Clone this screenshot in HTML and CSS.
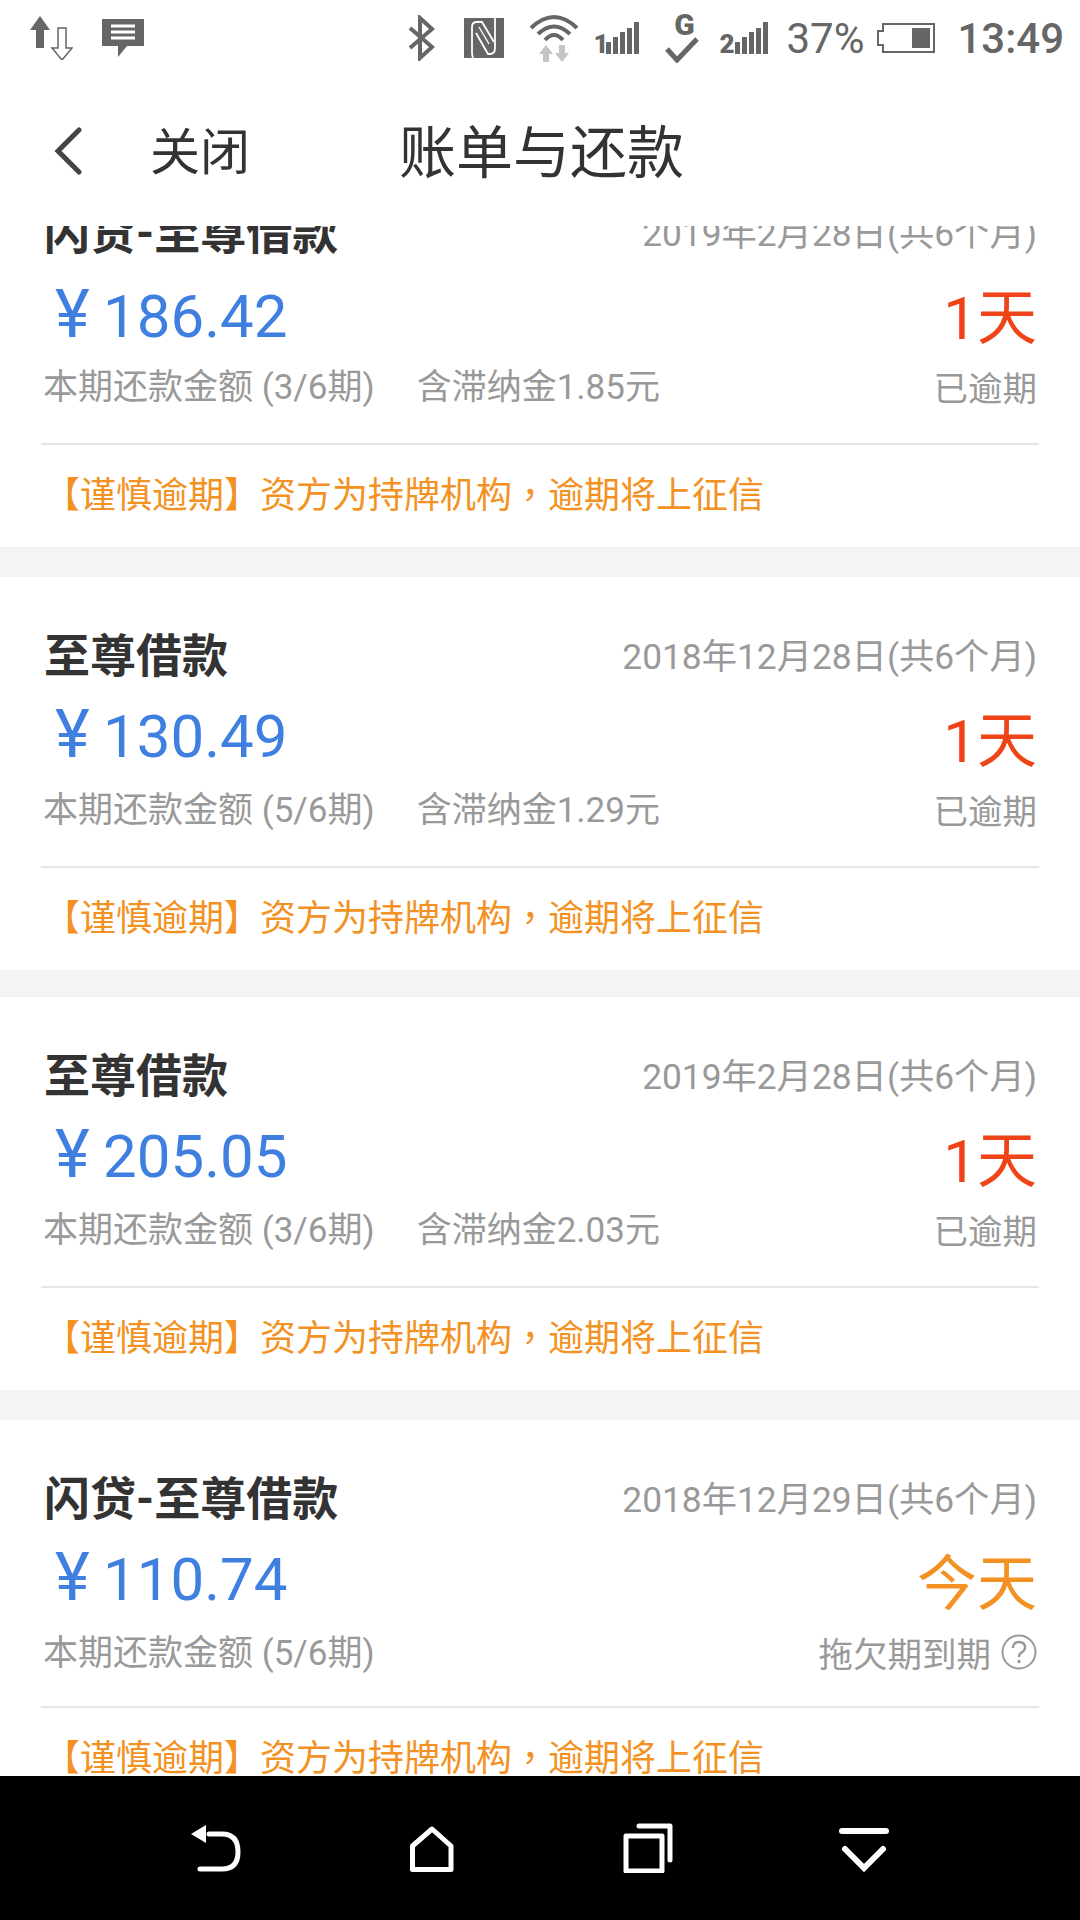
FILE: index.html
```html
<!DOCTYPE html>
<html lang="zh-CN">
<head>
  <meta charset="UTF-8" />
  <meta name="viewport" content="width=device-width, initial-scale=1.0"/>
  <title>账单与还款</title>
  <link rel="stylesheet" href="styles.css">
</head>
<body>
<div class="phone">

  <!-- Status bar -->
  <div class="status">
    <svg class="ic ic-updown" viewBox="0 0 44 44">
      <path d="M11 0 L21 14 H15 V32 H7 V14 H1 Z" fill="#666"/>
      <path d="M29 12 H37 V32 H43 L33 44 L23 32 H29 Z" fill="none" stroke="#666" stroke-width="1.5"/>
    </svg>
    <svg class="ic ic-msg" viewBox="0 0 42 38">
      <path d="M0 0 H42 V27 H25 L16 38 V27 H0 Z" fill="#666"/>
      <path d="M9 7 H33 M9 13 H33 M9 19 H33" stroke="#fff" stroke-width="3"/>
    </svg>
    <div class="spacer"></div>
    <svg class="ic ic-bt" viewBox="0 0 28 46">
      <path d="M3 13 L25 32 L13 43 V3 L25 14 L3 33" fill="none" stroke="#666" stroke-width="4"/>
    </svg>
    <svg class="ic ic-nfc" viewBox="0 0 40 40">
      <rect width="40" height="40" fill="#666"/>
      <path d="M9 40 Q8 38 8 34 V9 Q8 4 13 4 H18 L30 24" fill="none" stroke="#fff" stroke-width="1.8"/>
      <path d="M31 0 V30 Q31 36 26 36 H24 L12 15" fill="none" stroke="#fff" stroke-width="1.8"/>
      <path d="M15 9 L25 26" fill="none" stroke="#fff" stroke-width="1.4"/>
    </svg>
    <svg class="ic ic-wifi" viewBox="0 0 52 48">
      <path d="M3 14 Q26 -8 49 14 M10 20 Q26 5 42 20 M17 26 Q26 16 35 26" fill="none" stroke="#666" stroke-width="4"/>
      <path d="M18 31 L25 40 H21 V48 H15 V40 H11 Z M34 48 L41 39 H37 V31 H31 V39 H27 Z" fill="#c4c4c4"/>
    </svg>
    <div class="sig sig-one">
      <span class="sig-no">1</span><i class="b1"></i><i class="b2"></i><i class="b3"></i><i class="b4"></i><i class="b5"></i>
    </div>
    <div class="net">
      <span class="net-g">G</span>
      <svg class="ic ic-check" viewBox="0 0 38 26">
        <path d="M3 12 L13 23 L33 2" fill="none" stroke="#666" stroke-width="5"/>
      </svg>
    </div>
    <div class="sig sig-two">
      <span class="sig-no">2</span><i class="b1"></i><i class="b2"></i><i class="b3"></i><i class="b4"></i><i class="b5"></i>
    </div>
    <span class="pct">37%</span>
    <svg class="ic ic-batt" viewBox="0 0 58 30">
      <path d="M6 1 H57 V29 H6 V22 H1 V8 H6 Z" fill="none" stroke="#666" stroke-width="2"/>
      <rect x="35" y="5" width="18" height="20" fill="#666"/>
    </svg>
    <span class="clock">13:49</span>
  </div>

  <!-- Title bar -->
  <div class="topbar">
    <svg class="back" viewBox="0 0 30 48">
      <path d="M26 3 L5 24 L26 45" fill="none" stroke="#444" stroke-width="5" stroke-linecap="round"/>
    </svg>
    <span class="close">关闭</span>
    <span class="page-title">账单与还款</span>
  </div>

  <!-- Bills -->
  <div class="list">
    <div class="card card-first">
      <div class="row">
        <span class="name">闪贷-至尊借款</span>
        <span class="date">2019年2月28日(共6个月)</span>
      </div>
      <div class="row row-amount">
        <span class="amount"><span class="yen">¥</span>186.42</span>
        <span class="days">1天</span>
      </div>
      <div class="row row-sub">
        <span class="sub">本期还款金额 (3/6期)<span class="fee">含滞纳金1.85元</span></span>
        <span class="state">已逾期</span>
      </div>
      <div class="warn">【谨慎逾期】资方为持牌机构<span class="comma" lang="zh-TW">，</span>逾期将上征信</div>
    </div>

    <div class="card card-tight">
      <div class="row">
        <span class="name">至尊借款</span>
        <span class="date">2018年12月28日(共6个月)</span>
      </div>
      <div class="row row-amount">
        <span class="amount"><span class="yen">¥</span>130.49</span>
        <span class="days">1天</span>
      </div>
      <div class="row row-sub">
        <span class="sub">本期还款金额 (5/6期)<span class="fee">含滞纳金1.29元</span></span>
        <span class="state">已逾期</span>
      </div>
      <div class="warn">【谨慎逾期】资方为持牌机构<span class="comma" lang="zh-TW">，</span>逾期将上征信</div>
    </div>

    <div class="card">
      <div class="row">
        <span class="name">至尊借款</span>
        <span class="date">2019年2月28日(共6个月)</span>
      </div>
      <div class="row row-amount">
        <span class="amount"><span class="yen">¥</span>205.05</span>
        <span class="days">1天</span>
      </div>
      <div class="row row-sub">
        <span class="sub">本期还款金额 (3/6期)<span class="fee">含滞纳金2.03元</span></span>
        <span class="state">已逾期</span>
      </div>
      <div class="warn">【谨慎逾期】资方为持牌机构<span class="comma" lang="zh-TW">，</span>逾期将上征信</div>
    </div>

    <div class="card card-last">
      <div class="row">
        <span class="name">闪贷-至尊借款</span>
        <span class="date">2018年12月29日(共6个月)</span>
      </div>
      <div class="row row-amount">
        <span class="amount"><span class="yen">¥</span>110.74</span>
        <span class="days days-today">今天</span>
      </div>
      <div class="row row-sub">
        <span class="sub">本期还款金额 (5/6期)</span>
        <span class="state">拖欠期到期
          <svg class="help" viewBox="0 0 36 36">
            <circle cx="18" cy="18" r="16.5" fill="none" stroke="#999" stroke-width="2"/>
            <path d="M12 14 Q12 8 18 8 Q24 8 24 13.5 Q24 16.5 20.5 18.5 Q18 20 18 23" fill="none" stroke="#999" stroke-width="2.4"/>
            <circle cx="18" cy="27.5" r="1.7" fill="#999"/>
          </svg>
        </span>
      </div>
      <div class="warn">【谨慎逾期】资方为持牌机构<span class="comma" lang="zh-TW">，</span>逾期将上征信</div>
    </div>
  </div>

  <!-- Android nav bar -->
  <div class="navbar">
    <svg class="nav-ic" viewBox="0 0 50 50">
      <path d="M18 11 H31 Q47 11 47 29 Q47 46 31 46 H9" fill="none" stroke="#fff" stroke-width="5" stroke-linecap="round"/>
      <path d="M0 11 L15 2 V20 Z" fill="#fff"/>
    </svg>
    <svg class="nav-ic" viewBox="0 0 50 50">
      <path d="M25 6 L44 23 V46.5 H5.5 V23 Z" fill="none" stroke="#fff" stroke-width="5" stroke-linejoin="round"/>
    </svg>
    <svg class="nav-ic" viewBox="0 0 50 50">
      <rect x="3" y="13" width="36" height="35" fill="none" stroke="#fff" stroke-width="5" stroke-linejoin="round"/>
      <path d="M16 3 H47 V37" fill="none" stroke="#fff" stroke-width="5" stroke-linecap="round" stroke-linejoin="round"/>
    </svg>
    <svg class="nav-ic" viewBox="0 0 50 50">
      <path d="M3 8 H47" stroke="#fff" stroke-width="6" stroke-linecap="round"/>
      <path d="M6 26 L25 45 L44 26" fill="none" stroke="#fff" stroke-width="6" stroke-linecap="round"/>
    </svg>
  </div>

</div>
</body>
</html>
```

FILE: styles.css
```css
* {
  box-sizing: border-box;
}

body {
  margin: 0;
  background: #fff;
  font-family: Roboto, "Noto Sans CJK SC", sans-serif;
}

.phone {
  width: 1080px;
  height: 1920px;
  display: flex;
  flex-direction: column;
  overflow: hidden;
  background: #fff;
}

/* status bar */
.status {
  height: 76px;
  display: flex;
  align-items: center;
  padding: 0 16px 0 29px;
  color: #666;
  flex: none;
}
.spacer {
  flex: 1;
}
.ic {
  display: block;
  flex: none;
}
.ic-updown { width: 44px; height: 44px; margin-right: 29px; }
.ic-msg { width: 42px; height: 38px; }
.ic-bt { width: 28px; height: 46px; margin-right: 29px; }
.ic-nfc { width: 40px; height: 40px; margin-right: 24px; }
.ic-wifi { width: 52px; height: 48px; margin-right: 15px; }
.ic-batt { width: 58px; height: 30px; margin: 0 22px 0 13px; }
.ic-check { width: 38px; height: 26px; }

.net {
  display: flex;
  flex-direction: column;
  align-items: center;
  width: 38px;
  margin: 0 17px 0 25px;
}
.net-g {
  font-size: 30px;
  line-height: 24px;
  font-weight: 900;
  margin-left: 2px;
}

.sig {
  display: flex;
  align-items: flex-end;
  gap: 2px;
  height: 32px;
}
.sig i {
  display: block;
  width: 5px;
  background: #666;
}
.sig-no {
  font-size: 26px;
  line-height: 19px;
  font-weight: 900;
}
.sig-one .sig-no { width: 11px; margin-left: -2px; }
.sig-two .sig-no { width: 14px; }
.b1 { height: 12px; }
.b2 { height: 17px; }
.b3 { height: 22px; }
.b4 { height: 26px; }
.b5 { height: 32px; }

.pct {
  font-size: 42px;
  margin-left: 18px;
}
.clock {
  font-size: 42px;
  font-weight: 500;
}

/* title bar */
.topbar {
  height: 150px;
  display: flex;
  align-items: center;
  color: #333;
  padding-left: 53px;
  flex: none;
}
.back {
  width: 30px;
  height: 48px;
  margin-right: 67px;
}
.close {
  font-size: 50px;
  width: 249px;
  margin-bottom: 7px;
}
.page-title {
  font-size: 57px;
  margin-bottom: 7px;
}

/* bill list */
.list {
  flex: 1;
  overflow: hidden;
  background: #f4f4f4;
}
.card {
  background: #fff;
  height: 393px;
  margin-bottom: 30px;
  padding: 48px 41px 0;
}
.card-first {
  margin-top: -72px;
}
.card-tight {
  margin-bottom: 27px;
}
.row {
  display: flex;
  justify-content: space-between;
  align-items: center;
  padding: 0 2px 0 3px;
  height: 56px;
}
.row-amount {
  height: 80px;
  margin-top: 15px;
}
.row-sub {
  height: 46px;
  margin-top: 7px;
}
.name {
  font-size: 46px;
  font-weight: 700;
  color: #333;
  margin-bottom: 2px;
}
.date {
  font-size: 35.3px;
  color: #999;
}
.sub {
  font-size: 35px;
  color: #999;
  margin-left: -1px;
}
.state {
  font-size: 34.5px;
  color: #999;
  display: flex;
  align-items: center;
  gap: 10px;
  margin-top: 5px;
}
.fee {
  margin-left: 42px;
}
.amount {
  font-size: 60px;
  color: #3f7fe0;
}
.card-first .amount {
  margin-top: 6px;
}
.yen {
  display: inline-block;
  width: 48px;
  margin-left: 11px;
  font-size: 66px;
  line-height: 0;
}
.days {
  font-size: 60px;
  color: #ee4417;
  margin-bottom: 2px;
}
.days-today {
  color: #f39223;
}
.help {
  width: 36px;
  height: 36px;
}
.warn {
  border-top: 2px solid #e6e6e6;
  margin-top: 37px;
  padding-top: 22px;
  padding-left: 3px;
  font-size: 36px;
  line-height: 50px;
  color: #f39223;
  white-space: nowrap;
}
.card-last .warn {
  margin-top: 34px;
}
.comma {
  font-family: "Noto Sans CJK TC", sans-serif;
}

/* nav bar */
.navbar {
  height: 144px;
  background: #000;
  display: flex;
  align-items: center;
  justify-content: center;
  gap: 166px;
  flex: none;
}
.nav-ic {
  width: 50px;
  height: 50px;
}
```
